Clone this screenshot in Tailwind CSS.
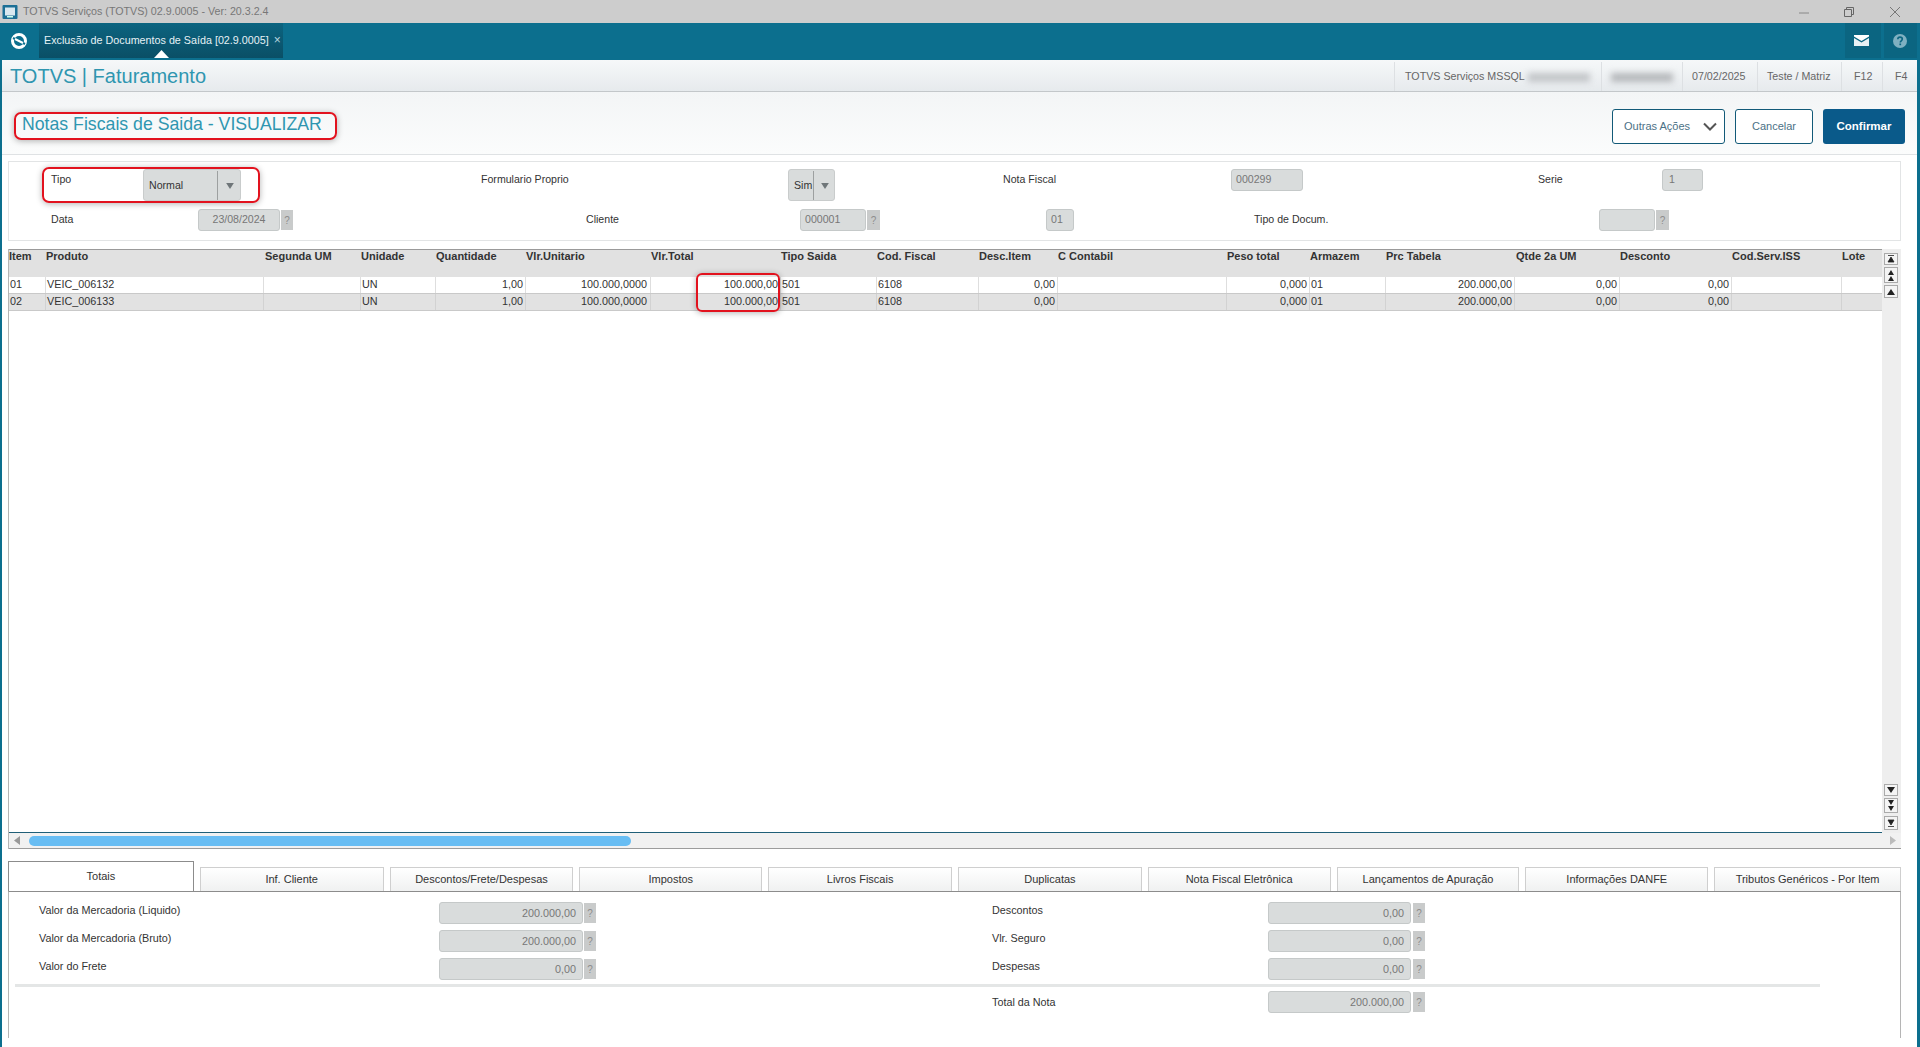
<!DOCTYPE html>
<html lang="pt-BR"><head><meta charset="utf-8"><title>TOTVS Faturamento</title>
<script src="https://cdn.jsdelivr.net/npm/@tailwindcss/browser@4"></script></head>
<body class="font-['Liberation_Sans',Arial,sans-serif] text-[10.8px] text-[#333] bg-white">
<div class="relative w-[1920px] h-[1047px] overflow-hidden flex flex-col">

<!-- window title -->
<div class="h-[23px] shrink-0 bg-[#cdcdcd] flex items-center relative">
  <svg class="ml-[2px] w-[16px] h-[16px]" viewBox="0 0 16 16"><rect x="0.5" y="1" width="15" height="14" rx="1" fill="#1c6f96"/><rect x="3" y="3.5" width="10" height="8" fill="#d9e8f0"/><rect x="5" y="12" width="6" height="1.5" fill="#cfe"/></svg>
  <span class="ml-[5px] text-[10.7px] text-[#777]">TOTVS Serviços (TOTVS) 02.9.0005 - Ver: 20.3.2.4</span>
  <div class="ml-auto flex items-center">
    <svg class="w-[12px] h-[12px] mr-[33px]" viewBox="0 0 12 12"><path d="M1 7h10" stroke="#888" fill="none"/></svg>
    <svg class="w-[12px] h-[12px] mr-[34px]" viewBox="0 0 12 12"><path d="M1.5 3.5h7v7h-7zM3.5 3.5v-2h7v7h-2" stroke="#666" fill="none"/></svg>
    <svg class="w-[12px] h-[12px] mr-[19px]" viewBox="0 0 12 12"><path d="M1 1l10 10M11 1L1 11" stroke="#777" fill="none"/></svg>
  </div>
</div>

<!-- app nav -->
<div class="h-[37px] shrink-0 bg-[#0c6f8e] flex items-start relative">
  <div class="w-[39px] h-[35px] flex items-center justify-center pr-[2px]">
    <svg class="w-[18px] h-[18px]" viewBox="0 0 18 18"><circle cx="9" cy="9" r="6.5" stroke="#fff" stroke-width="3" fill="none"/><path d="M3 6l12 6" stroke="#0c6f8e" stroke-width="2"/><path d="M5 7l8 4" stroke="#fff" stroke-width="2"/></svg>
  </div>
  <div class="relative w-[244px] h-[35px] bg-gradient-to-b from-[#0c6480] to-[#0a4f66] flex items-center pl-[5px] text-[#e6f1f5] text-[10.75px] whitespace-nowrap">
    <span>Exclusão de Documentos de Saída [02.9.0005]</span>
    <span class="ml-[5px] text-[#b9d4de] text-[12px] -mt-[2px]">×</span>
    <svg class="absolute left-[115px] bottom-0 w-[15px] h-[8px]" viewBox="0 0 15 8"><path d="M7.5 0L15 8H0z" fill="#fff"/></svg>
  </div>
  <div class="ml-auto flex h-[35px] pr-[3px]">
    <div class="w-[36px] bg-[#0b6581] flex items-center justify-center pr-[3px]">
      <svg class="w-[15px] h-[11px]" viewBox="0 0 15 11"><path d="M0 0h15v1.5L7.5 6 0 1.5z" fill="#fff"/><path d="M0 3l7.5 4.5L15 3v8H0z" fill="#e8f2f5"/></svg>
    </div>
    <div class="ml-[3px] w-[33px] bg-[#0b6581] flex items-center justify-center pr-[1px]">
      <svg class="w-[14px] h-[14px]" viewBox="0 0 14 14"><circle cx="7" cy="7" r="7" fill="#7fb0c1"/><path d="M4.8 5.2C4.8 3.9 5.8 3.1 7 3.1s2.3.8 2.3 2c0 1.700-2 1.700-2 3.300" stroke="#0b6581" stroke-width="1.600" fill="none"/><rect x="6.400" y="9.500" width="1.700" height="1.700" fill="#0b6581"/></svg>
    </div>
  </div>
</div>

<!-- main -->
<div class="flex-1 flex flex-col border-l-2 border-r-[3px] border-[#0c6f8e] bg-white min-h-0">
  <!-- module header -->
  <div class="h-[32px] shrink-0 bg-gradient-to-b from-[#f6f8f9] to-[#e6eaed] border-b border-[#c3c7ca] flex items-center pl-[8px]">
    <span class="text-[20px] text-[#2f96b0] pt-[1px]">TOTVS | Faturamento</span>
    <div class="ml-auto flex items-center h-[30px] text-[10.7px] text-[#666] pr-[1px] pt-[1px]">
      <div class="h-full border-l border-[#dde0e3] pl-[10px] w-[207px] flex items-center relative">
        <span>TOTVS Serviços MSSQL</span>
        <div class="absolute left-[133px] top-[11px] w-[62px] h-[9px] bg-[#c2c5c8] blur-[3px]"></div>
      </div>
      <div class="h-full border-l border-[#dde0e3] w-[81px] relative">
        <div class="absolute left-[9px] top-[11px] w-[62px] h-[9px] bg-[#b5b8bb] blur-[3px]"></div>
      </div>
      <div class="h-full border-l border-[#dde0e3] w-[75px] pl-[9px] flex items-center">07/02/2025</div>
      <div class="h-full border-l border-[#dde0e3] w-[84px] pl-[9px] flex items-center">Teste / Matriz</div>
      <div class="h-full border-l border-[#dde0e3] w-[41px] pl-[12px] flex items-center">F12</div>
      <div class="h-full border-l border-[#dde0e3] w-[34px] pl-[12px] flex items-center">F4</div>
    </div>
  </div>

  <!-- page title -->
  <div class="h-[63px] shrink-0 bg-gradient-to-b from-[#f3f5f6] to-[#fbfcfc] border-b border-[#dfe2e4] flex items-start pl-[20px]">
    <span class="text-[17.7px] text-[#2f96b0] mt-[19px]">Notas Fiscais de Saida - VISUALIZAR</span>
    <div class="ml-auto flex gap-[10px] pr-[12px] mt-[17px] text-[11px]">
      <button class="w-[113px] h-[35px] bg-white border border-[#125a78] rounded-[3px] text-[#4b7186] flex items-center pl-[11px]">Outras Ações
        <svg class="ml-[13px] w-[14px] h-[9px]" viewBox="0 0 14 9"><path d="M1 1.500l6 6 6-6" stroke="#555" stroke-width="2" fill="none"/></svg>
      </button>
      <button class="w-[78px] h-[35px] bg-white border border-[#125a78] rounded-[3px] text-[#4b7186]">Cancelar</button>
      <button class="w-[82px] h-[35px] bg-[#0a5a8a] rounded-[3px] text-white font-bold text-[11.5px]">Confirmar</button>
    </div>
  </div>

  <!-- form -->
  <div class="mt-[6px] ml-[6px] w-[1893px] h-[80px] shrink-0 border border-[#e2e4e5] pt-[7px] text-[10.6px]">
    <div class="flex h-[32px] pl-[42px]">
      <span class="w-[92px] h-[21px] flex items-center">Tipo</span>
      <div class="w-[98px] h-[32px] bg-[#d9dcdc] border border-[#c9cccc] rounded-[3px] flex items-center pl-[5px] pt-[1px]">
        <span class="w-[68px]">Normal</span>
        <div class="h-full border-l border-[#9da0a0] flex-1 flex items-center justify-center pl-[2px]"><svg class="w-[8px] h-[6px]" viewBox="0 0 9 7"><path d="M0 0h9L4.500 7z" fill="#6f7679"/></svg></div>
      </div>
      <span class="ml-[240px] w-[307px] h-[21px] flex items-center">Formulario Proprio</span>
      <div class="w-[47px] h-[32px] bg-[#d9dcdc] border border-[#c9cccc] rounded-[3px] flex items-center pl-[5px] pt-[1px]">
        <span class="w-[19px]">Sim</span>
        <div class="h-full border-l border-[#9da0a0] flex-1 flex items-center justify-center pl-[2px]"><svg class="w-[8px] h-[6px]" viewBox="0 0 9 7"><path d="M0 0h9L4.500 7z" fill="#6f7679"/></svg></div>
      </div>
      <span class="ml-[168px] w-[228px] h-[21px] flex items-center">Nota Fiscal</span>
      <div class="w-[72px] h-[22px] bg-[#d9dcdc] border border-[#c5c9c9] rounded-[3px] flex items-center pl-[4px] text-[#777]">000299</div>
      <span class="ml-[235px] w-[124px] h-[21px] flex items-center">Serie</span>
      <div class="w-[41px] h-[22px] bg-[#d9dcdc] border border-[#c5c9c9] rounded-[3px] flex items-center pl-[6px] text-[#777]">1</div>
    </div>
    <div class="flex h-[22px] mt-[8px] pl-[42px]">
      <span class="w-[147px] h-[21px] flex items-center">Data</span>
      <div class="w-[82px] bg-[#d9dcdc] border border-[#c5c9c9] rounded-[3px] flex items-center justify-center text-[#777]">23/08/2024</div>
      <div class="ml-px w-[12px] h-[20px] mt-px bg-[#c9cbcb] flex items-center justify-center text-[#8d8d8d] text-[10px]">?</div>
      <span class="ml-[293px] w-[214px] h-[21px] flex items-center">Cliente</span>
      <div class="w-[66px] bg-[#d9dcdc] border border-[#c5c9c9] rounded-[3px] flex items-center pl-[4px] text-[#777]">000001</div>
      <div class="ml-px w-[13px] h-[20px] mt-px bg-[#c9cbcb] flex items-center justify-center text-[#8d8d8d] text-[10px]">?</div>
      <div class="ml-[166px] w-[28px] bg-[#d9dcdc] border border-[#c5c9c9] rounded-[3px] flex items-center pl-[4px] text-[#777]">01</div>
      <span class="ml-[180px] w-[345px] h-[21px] flex items-center">Tipo de Docum.</span>
      <div class="w-[56px] bg-[#d9dcdc] border border-[#c5c9c9] rounded-[3px]"></div>
      <div class="ml-px w-[13px] h-[20px] mt-px bg-[#c9cbcb] flex items-center justify-center text-[#8d8d8d] text-[10px]">?</div>
    </div>
  </div>

  <!-- grid -->
  <div class="mt-[8px] ml-[6px] w-[1893px] h-[600px] shrink-0 flex flex-col border-l border-[#b5b5b5]">
    <div class="flex h-[584px]">
      <div class="w-[1873px] flex flex-col border-b border-[#1f5f78]">
        <div class="h-[28px] bg-[#e1e1e1] border-t border-[#9a9a9a] font-bold text-[11px] grid grid-cols-[37px_218px_97px_75px_90px_125px_130px_96px_102px_79px_169px_83px_76px_129px_105px_112px_110px_39px] leading-[12px]">
          <span>Item</span><span>Produto</span><span class="pl-px">Segunda UM</span><span>Unidade</span><span>Quantidade</span><span>Vlr.Unitario</span><span>Vlr.Total</span><span>Tipo Saida</span><span>Cod. Fiscal</span><span>Desc.Item</span><span>C Contabil</span><span>Peso total</span><span>Armazem</span><span>Prc Tabela</span><span class="pl-px">Qtde 2a UM</span><span>Desconto</span><span>Cod.Serv.ISS</span><span>Lote</span>
        </div>
        <div class="h-[17px] bg-white border-b border-[#c9c9c9] grid grid-cols-[37px_218px_97px_75px_90px_125px_130px_96px_102px_79px_169px_83px_76px_129px_105px_112px_110px_39px] leading-[15px] divide-x divide-[#dedede]">
          <span class="pl-px">01</span><span class="pl-px">VEIC_006132</span><span></span><span class="pl-px">UN</span><span class="pr-[2px] text-right">1,00</span><span class="pr-[3px] text-right">100.000,0000</span><span class="pr-[2px] text-right">100.000,00</span><span class="pl-px">501</span><span class="pl-px">6108</span><span class="pr-[2px] text-right">0,00</span><span></span><span class="pr-[2px] text-right">0,000</span><span class="pl-px">01</span><span class="pr-[2px] text-right">200.000,00</span><span class="pr-[2px] text-right">0,00</span><span class="pr-[2px] text-right">0,00</span><span></span><span></span>
        </div>
        <div class="h-[17px] bg-[#e2e2e2] border-b border-[#c9c9c9] grid grid-cols-[37px_218px_97px_75px_90px_125px_130px_96px_102px_79px_169px_83px_76px_129px_105px_112px_110px_39px] leading-[15px] divide-x divide-[#d2d2d2]">
          <span class="pl-px">02</span><span class="pl-px">VEIC_006133</span><span></span><span class="pl-px">UN</span><span class="pr-[2px] text-right">1,00</span><span class="pr-[3px] text-right">100.000,0000</span><span class="pr-[2px] text-right">100.000,00</span><span class="pl-px">501</span><span class="pl-px">6108</span><span class="pr-[2px] text-right">0,00</span><span></span><span class="pr-[2px] text-right">0,000</span><span class="pl-px">01</span><span class="pr-[2px] text-right">200.000,00</span><span class="pr-[2px] text-right">0,00</span><span class="pr-[2px] text-right">0,00</span><span></span><span></span>
        </div>
      </div>
      <div class="w-[19px] bg-[#eeeeee] flex flex-col items-center pt-[4px] pr-[2px]">
        <div class="w-[14px] h-[12px] bg-[#f4f4f4] border border-[#aaa] flex items-center justify-center"><svg class="w-[8px] h-[8px]" viewBox="0 0 8 8"><path d="M1 .5h6M4 2l3 5H1z" stroke="#222" fill="#222" stroke-width=".8"/></svg></div>
        <div class="w-[14px] h-[16px] mt-[2px] bg-[#f4f4f4] border border-[#aaa] flex items-center justify-center"><svg class="w-[8px] h-[11px]" viewBox="0 0 8 11"><path d="M4 0l3 5H1zM4 6l3 5H1z" fill="#222"/></svg></div>
        <div class="w-[14px] h-[13px] mt-[2px] bg-[#f4f4f4] border border-[#aaa] flex items-center justify-center"><svg class="w-[8px] h-[6px]" viewBox="0 0 8 6"><path d="M4 0l4 6H0z" fill="#222"/></svg></div>
        <div class="w-[14px] h-[12px] mt-auto bg-[#f4f4f4] border border-[#aaa] flex items-center justify-center"><svg class="w-[8px] h-[6px]" viewBox="0 0 8 6"><path d="M4 6l4-6H0z" fill="#222"/></svg></div>
        <div class="w-[14px] h-[15px] mt-[2px] bg-[#f4f4f4] border border-[#aaa] flex items-center justify-center"><svg class="w-[8px] h-[11px]" viewBox="0 0 8 11"><path d="M4 5L1 0h6zM4 11L1 6h6z" fill="#222"/></svg></div>
        <div class="w-[14px] h-[14px] mt-[3px] mb-[3px] bg-[#f4f4f4] border border-[#aaa] flex items-center justify-center"><svg class="w-[8px] h-[8px]" viewBox="0 0 8 8"><path d="M1 7.500h6M4 6L1 1h6z" stroke="#222" fill="#222" stroke-width=".8"/></svg></div>
      </div>
    </div>
    <div class="h-[16px] bg-[#f1f1f1] border-b border-[#9c9c9c] flex items-center relative">
      <svg class="ml-[5px] w-[6px] h-[9px]" viewBox="0 0 6 9"><path d="M6 0v9L0 4.500z" fill="#999"/></svg>
      <div class="ml-[9px] w-[602px] h-[10px] rounded-full bg-[#68bdf3]"></div>
      <svg class="absolute left-[1881px] top-[3px] w-[6px] h-[9px]" viewBox="0 0 6 9"><path d="M0 0v9l6-4.500z" fill="#bbb"/></svg>
    </div>
  </div>

  <!-- tabs -->
  <div class="mt-[12px] ml-[6px] w-[1893px] h-[30px] shrink-0 flex items-end gap-[6px] text-center text-[11px]">
    <div class="w-[186px] h-[30px] bg-white border-x border-t border-[#8c8c8c] flex items-center justify-center">Totais</div>
    <div class="w-[184px] h-[24px] bg-gradient-to-b from-white to-[#f0f1f1] border-x border-t border-[#cfcfcf] flex items-center justify-center">Inf. Cliente</div>
    <div class="w-[184px] h-[24px] bg-gradient-to-b from-white to-[#f0f1f1] border-x border-t border-[#cfcfcf] flex items-center justify-center">Descontos/Frete/Despesas</div>
    <div class="w-[183px] h-[24px] bg-gradient-to-b from-white to-[#f0f1f1] border-x border-t border-[#cfcfcf] flex items-center justify-center">Impostos</div>
    <div class="w-[184px] h-[24px] bg-gradient-to-b from-white to-[#f0f1f1] border-x border-t border-[#cfcfcf] flex items-center justify-center">Livros Fiscais</div>
    <div class="w-[184px] h-[24px] bg-gradient-to-b from-white to-[#f0f1f1] border-x border-t border-[#cfcfcf] flex items-center justify-center">Duplicatas</div>
    <div class="w-[183px] h-[24px] bg-gradient-to-b from-white to-[#f0f1f1] border-x border-t border-[#cfcfcf] flex items-center justify-center">Nota Fiscal Eletrônica</div>
    <div class="w-[183px] h-[24px] bg-gradient-to-b from-white to-[#f0f1f1] border-x border-t border-[#cfcfcf] flex items-center justify-center">Lançamentos de Apuração</div>
    <div class="w-[183px] h-[24px] bg-gradient-to-b from-white to-[#f0f1f1] border-x border-t border-[#cfcfcf] flex items-center justify-center">Informações DANFE</div>
    <div class="w-[187px] h-[24px] bg-gradient-to-b from-white to-[#f0f1f1] border-x border-t border-[#cfcfcf] flex items-center justify-center">Tributos Genéricos - Por Item</div>
  </div>

  <!-- panel -->
  <div class="ml-[6px] w-[1893px] h-[147px] shrink-0 border-x border-t border-[#8c8c8c] border-r-[#b5b5b5] border-l-[#b5b5b5] pt-[10px]">
    <div class="flex h-[22px]">
      <span class="ml-[30px] w-[400px] flex items-center -mt-[5px]">Valor da Mercadoria (Liquido)</span>
      <div class="w-[144px] bg-[#d9dcdc] border border-[#c5c9c9] rounded-[3px] flex items-center justify-end pr-[6px] text-[#777]">200.000,00</div>
      <div class="ml-px w-[12px] h-[20px] mt-px bg-[#c9cbcb] flex items-center justify-center text-[#8d8d8d] text-[10px]">?</div>
      <span class="ml-[396px] w-[276px] flex items-center -mt-[5px]">Descontos</span>
      <div class="w-[143px] bg-[#d9dcdc] border border-[#c5c9c9] rounded-[3px] flex items-center justify-end pr-[6px] text-[#777]">0,00</div>
      <div class="ml-[2px] w-[12px] h-[20px] mt-px bg-[#c9cbcb] flex items-center justify-center text-[#8d8d8d] text-[10px]">?</div>
    </div>
    <div class="flex h-[22px] mt-[6px]">
      <span class="ml-[30px] w-[400px] flex items-center -mt-[5px]">Valor da Mercadoria (Bruto)</span>
      <div class="w-[144px] bg-[#d9dcdc] border border-[#c5c9c9] rounded-[3px] flex items-center justify-end pr-[6px] text-[#777]">200.000,00</div>
      <div class="ml-px w-[12px] h-[20px] mt-px bg-[#c9cbcb] flex items-center justify-center text-[#8d8d8d] text-[10px]">?</div>
      <span class="ml-[396px] w-[276px] flex items-center -mt-[5px]">Vlr. Seguro</span>
      <div class="w-[143px] bg-[#d9dcdc] border border-[#c5c9c9] rounded-[3px] flex items-center justify-end pr-[6px] text-[#777]">0,00</div>
      <div class="ml-[2px] w-[12px] h-[20px] mt-px bg-[#c9cbcb] flex items-center justify-center text-[#8d8d8d] text-[10px]">?</div>
    </div>
    <div class="flex h-[22px] mt-[6px]">
      <span class="ml-[30px] w-[400px] flex items-center -mt-[5px]">Valor do Frete</span>
      <div class="w-[144px] bg-[#d9dcdc] border border-[#c5c9c9] rounded-[3px] flex items-center justify-end pr-[6px] text-[#777]">0,00</div>
      <div class="ml-px w-[12px] h-[20px] mt-px bg-[#c9cbcb] flex items-center justify-center text-[#8d8d8d] text-[10px]">?</div>
      <span class="ml-[396px] w-[276px] flex items-center -mt-[5px]">Despesas</span>
      <div class="w-[143px] bg-[#d9dcdc] border border-[#c5c9c9] rounded-[3px] flex items-center justify-end pr-[6px] text-[#777]">0,00</div>
      <div class="ml-[2px] w-[12px] h-[20px] mt-px bg-[#c9cbcb] flex items-center justify-center text-[#8d8d8d] text-[10px]">?</div>
    </div>
    <div class="mt-[4px] ml-[6px] w-[1805px] h-[3px] bg-[#e4e6e6]"></div>
    <div class="flex h-[22px] mt-[4px]">
      <span class="ml-[983px] w-[276px] flex items-center">Total da Nota</span>
      <div class="w-[143px] bg-[#d9dcdc] border border-[#c5c9c9] rounded-[3px] flex items-center justify-end pr-[6px] text-[#777]">200.000,00</div>
      <div class="ml-[2px] w-[12px] h-[20px] mt-px bg-[#c9cbcb] flex items-center justify-center text-[#8d8d8d] text-[10px]">?</div>
    </div>
  </div>
</div>

<!-- red annotations lying over the screenshot -->
<div class="absolute left-[14px] top-[112px] w-[323px] h-[28px] border-2 border-[#e2121e] rounded-[7px] shadow-[0_1px_6px_rgba(0,0,0,0.3)]"></div>
<div class="absolute left-[42px] top-[167px] w-[218px] h-[36px] border-2 border-[#e2121e] rounded-[7px] shadow-[0_1px_6px_rgba(0,0,0,0.3)]"></div>
<div class="absolute left-[696px] top-[273px] w-[84px] h-[39px] border-2 border-[#e2121e] rounded-[6px] shadow-[0_1px_6px_rgba(0,0,0,0.3)]"></div>
</div>
</body></html>
